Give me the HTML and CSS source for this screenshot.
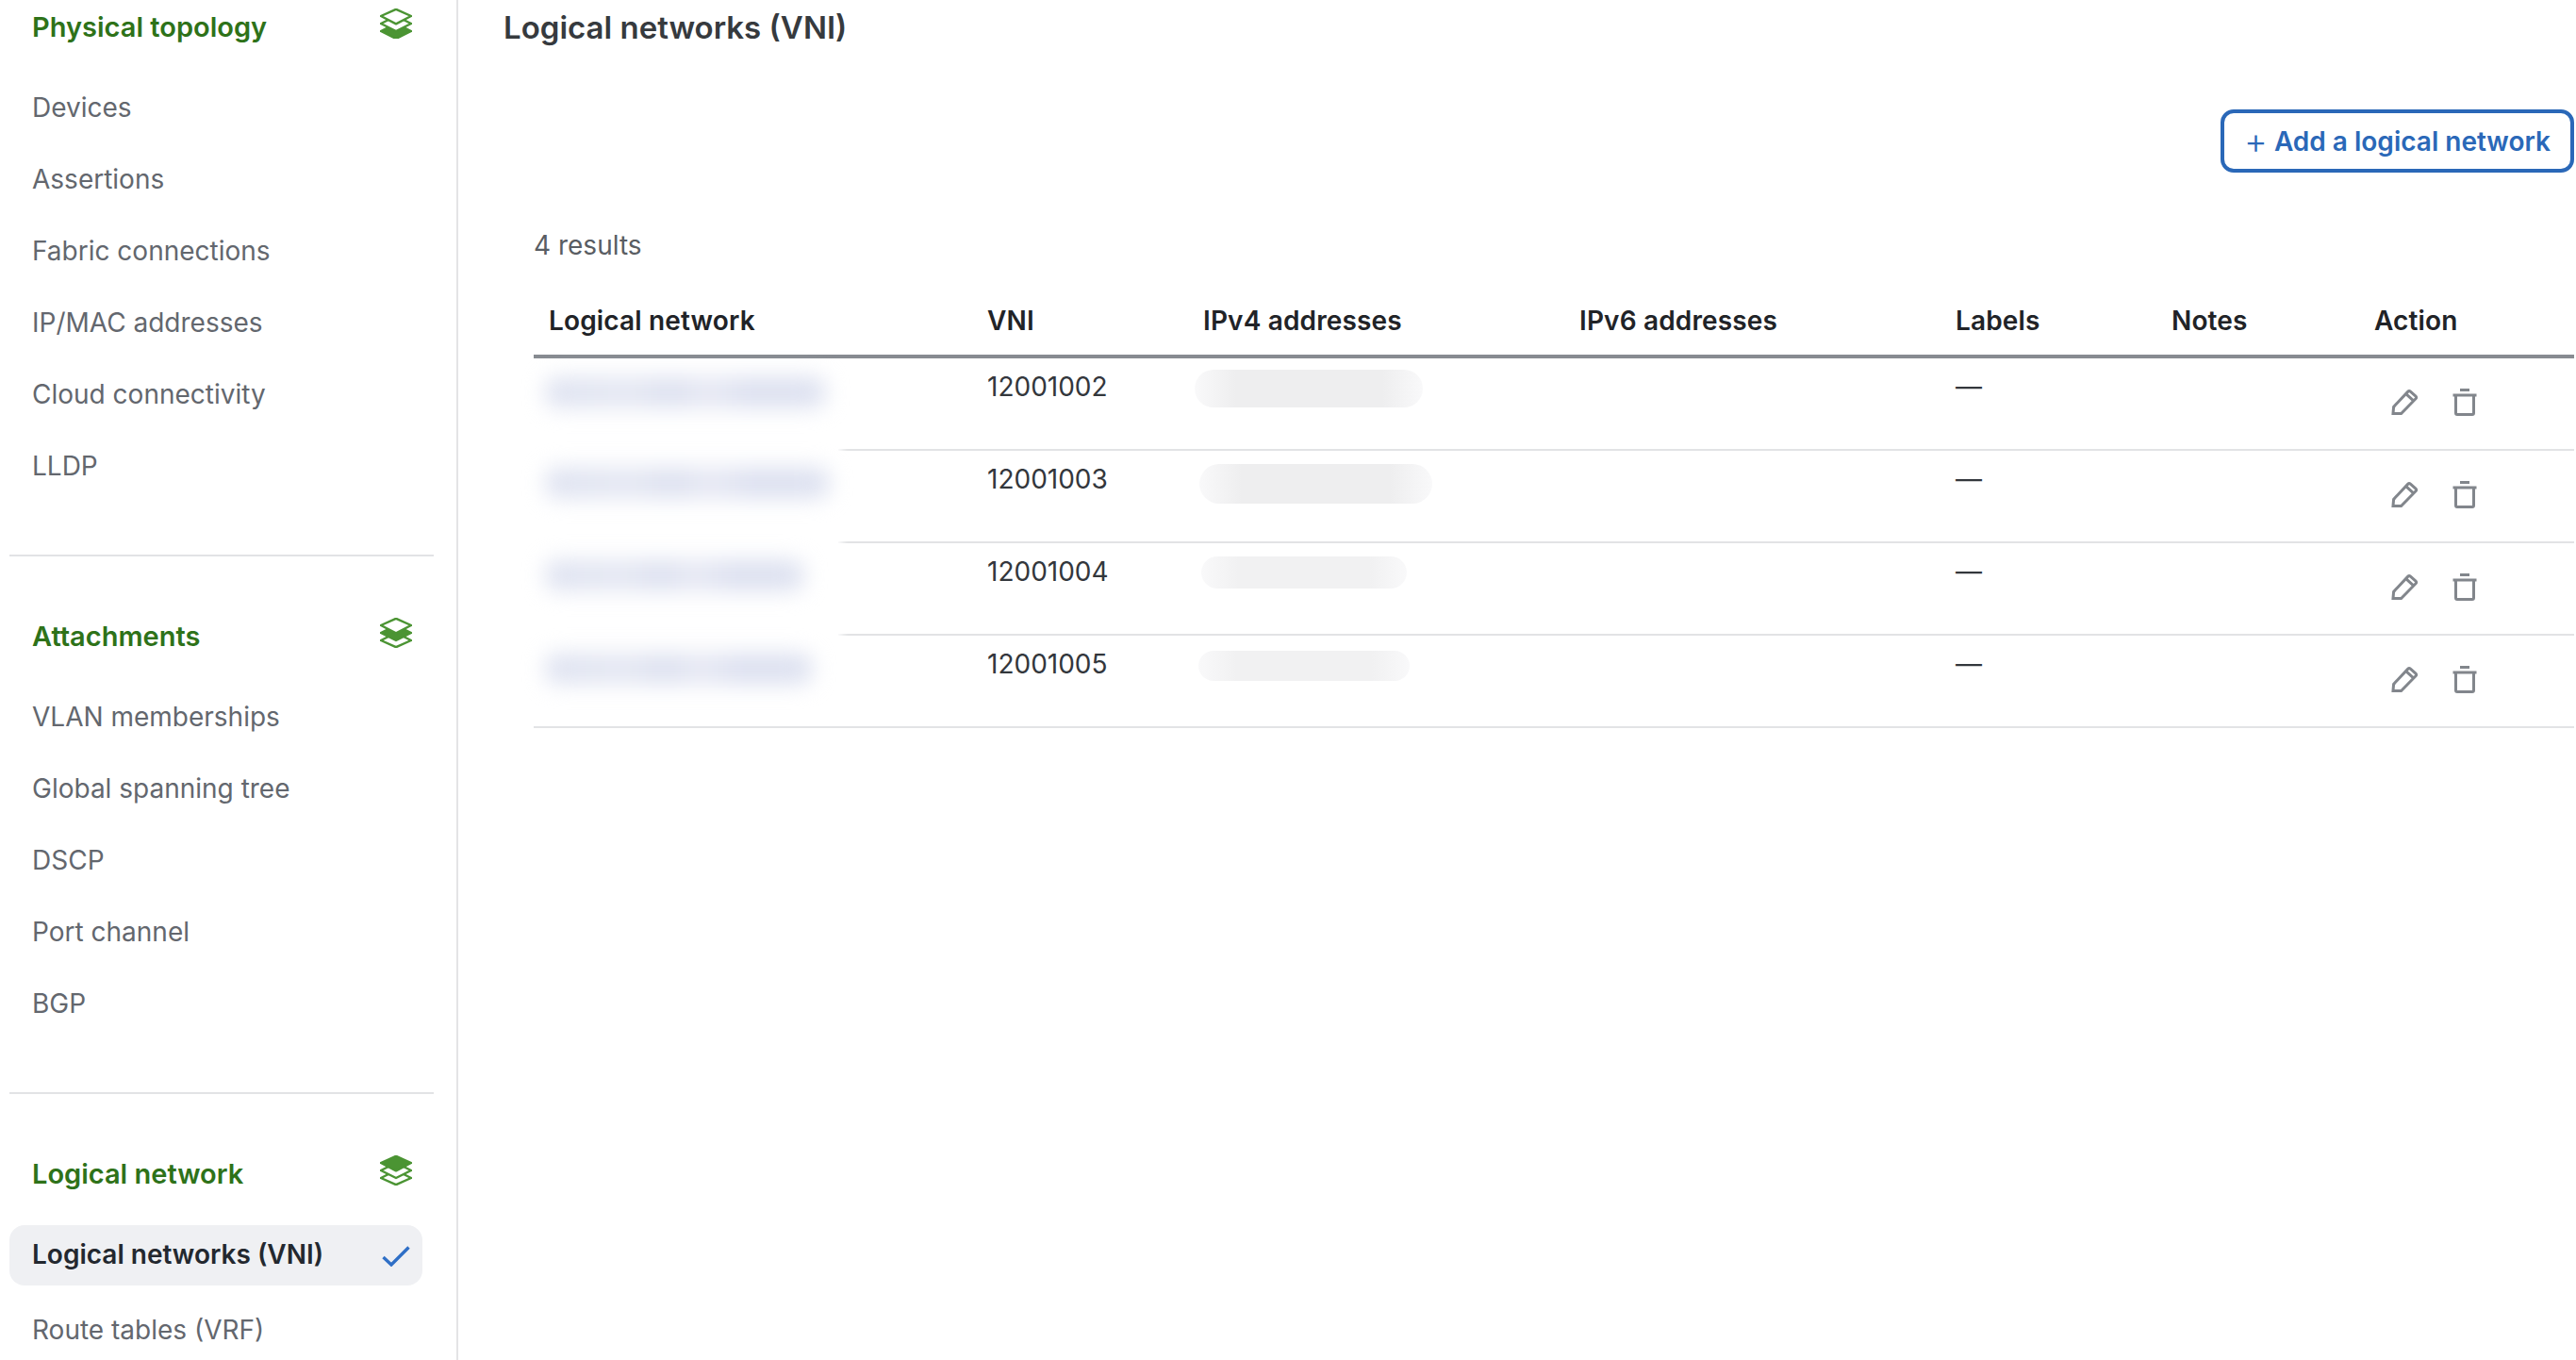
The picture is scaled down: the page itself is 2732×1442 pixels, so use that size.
FILE: index.html
```html
<!DOCTYPE html>
<html lang="en">
<head>
<meta charset="utf-8">
<title>Logical networks (VNI)</title>
<link rel="stylesheet" href="styles.css">
</head>
<body>
<svg class="defs" width="0" height="0" aria-hidden="true">
  <defs>
    <path id="d-pencil" d="M2 26.5 L2.6 19.4 L17.6 3.4 Q19 2 20.4 3.2 L26 8 Q27.4 9.4 26 10.8 L10.6 26.6 Z M16.5 6.4 L23.6 12.8"/>
    <path id="d-trash" d="M8 1.5 H18 M0.5 7 H25.5 M3.5 7 V26 Q3.5 27.5 5 27.5 H21 Q22.5 27.5 22.5 26 V7"/>
  </defs>
</svg>
<div class="app">
  <nav class="sidebar">
    <section class="nav-section">
      <header class="nav-head"><span>Physical topology</span>
        <svg class="layers" viewBox="0 0 34 32"><path class="lo" d="M17 16 L33 24 L17 32 L1 24 Z"/><path d="M1 16 L17 8 L33 16 L17 24 Z"/><path d="M1 8 L17 0.8 L33 8 L17 16.4 Z"/></svg>
      </header>
      <a class="nav-item">Devices</a>
      <a class="nav-item">Assertions</a>
      <a class="nav-item">Fabric connections</a>
      <a class="nav-item">IP/MAC addresses</a>
      <a class="nav-item">Cloud connectivity</a>
      <a class="nav-item">LLDP</a>
    </section>
    <section class="nav-section">
      <header class="nav-head"><span>Attachments</span>
        <svg class="layers" viewBox="0 0 34 32"><path d="M1 24 L17 16 L33 24 L17 31.2 Z"/><path class="lo" d="M1 16 L17 8 L33 16 L17 24 Z"/><path d="M1 8 L17 0.8 L33 8 L17 16.4 Z"/></svg>
      </header>
      <a class="nav-item">VLAN memberships</a>
      <a class="nav-item">Global spanning tree</a>
      <a class="nav-item">DSCP</a>
      <a class="nav-item">Port channel</a>
      <a class="nav-item">BGP</a>
    </section>
    <section class="nav-section last">
      <header class="nav-head head-tight"><span>Logical network</span>
        <svg class="layers" viewBox="0 0 34 32"><path d="M1 24 L17 16 L33 24 L17 31.2 Z"/><path d="M1 16 L17 8 L33 16 L17 24 Z"/><path class="lo" d="M1 8 L17 0.8 L33 8 L17 16.4 Z"/></svg>
      </header>
      <a class="nav-item selected"><span>Logical networks (VNI)</span>
        <svg class="check" viewBox="0 0 30 22"><path d="M1.5 12 L10 20 L28.5 1.5"/></svg>
      </a>
      <a class="nav-item">Route tables (VRF)</a>
    </section>
  </nav>
  <main class="content">
    <h1 class="title">Logical networks (VNI)</h1>
    <div class="toolbar">
      <button class="add-btn" type="button"><span class="plus">+</span> Add a logical network</button>
    </div>
    <p class="results">4 results</p>
    <div class="table-wrap">
      <table class="grid">
        <colgroup>
          <col class="c1"><col class="c2"><col class="c3"><col class="c4"><col class="c5"><col class="c6"><col class="c7">
        </colgroup>
        <thead>
          <tr><th>Logical network</th><th>VNI</th><th>IPv4 addresses</th><th>IPv6 addresses</th><th>Labels</th><th>Notes</th><th>Action</th></tr>
        </thead>
        <tbody>
          <tr><td></td><td>12001002</td><td class="ip"><div class="pill p1"></div></td><td></td><td>—</td><td></td>
            <td class="act"><div class="actions"><svg class="ico" viewBox="0 0 29 29"><use href="#d-pencil"/></svg><svg class="ico" viewBox="0 0 26 29"><use href="#d-trash"/></svg></div></td></tr>
          <tr><td></td><td>12001003</td><td class="ip"><div class="pill p2"></div></td><td></td><td>—</td><td></td>
            <td class="act"><div class="actions"><svg class="ico" viewBox="0 0 29 29"><use href="#d-pencil"/></svg><svg class="ico" viewBox="0 0 26 29"><use href="#d-trash"/></svg></div></td></tr>
          <tr><td></td><td>12001004</td><td class="ip"><div class="pill p3"></div></td><td></td><td>—</td><td></td>
            <td class="act"><div class="actions"><svg class="ico" viewBox="0 0 29 29"><use href="#d-pencil"/></svg><svg class="ico" viewBox="0 0 26 29"><use href="#d-trash"/></svg></div></td></tr>
          <tr><td></td><td>12001005</td><td class="ip"><div class="pill p4"></div></td><td></td><td>—</td><td></td>
            <td class="act"><div class="actions"><svg class="ico" viewBox="0 0 29 29"><use href="#d-pencil"/></svg><svg class="ico" viewBox="0 0 26 29"><use href="#d-trash"/></svg></div></td></tr>
        </tbody>
      </table>
      <div class="redact">
        <div class="bar b1"></div>
        <div class="bar b2"></div>
        <div class="bar b3"></div>
        <div class="bar b4"></div>
      </div>
    </div>
  </main>
</div>
</body>
</html>
```
FILE: styles.css
```css
* { box-sizing: border-box; }
html, body { margin: 0; height: 100%; overflow: hidden; background: #fff; }
body { font-family: Inter, "Liberation Sans", sans-serif; font-size: 28px; color: #23272c; }
.defs { position: absolute; }
.app { display: flex; height: 1442px; overflow: hidden; }

.sidebar { width: 486px; flex: none; border-right: 2px solid #e4e4e6; padding-left: 10px; height: 1442px; overflow: hidden; }
.nav-section { width: 450px; border-bottom: 2px solid #e2e3e5; padding-bottom: 56px; margin-bottom: 56px; }
.nav-section.last { border-bottom: 0; padding-bottom: 0; margin-bottom: 0; }
.nav-head { display: flex; justify-content: space-between; align-items: center; height: 56px; padding: 0 23px 0 24px; margin-bottom: 20px; font-size: 29px; font-weight: 600; color: #2e7219; }
.nav-head.head-tight { margin-bottom: 27px; }
.layers { width: 34px; height: 32px; margin-top: -6px; }
.layers path { fill: #fff; stroke: #4b9433; stroke-width: 2.4; stroke-linejoin: round; }
.layers path.lo { fill: #4b9433; }
.nav-item { display: flex; align-items: center; height: 76px; padding-left: 24px; color: #63676e; }
.nav-item.selected { height: 64px; width: 438px; justify-content: space-between; padding: 0 13px 3px 24px; margin-bottom: 9px; background: #eff0f3; border-radius: 16px; font-weight: 600; color: #23282f; }
.check { width: 30px; height: 22px; margin-top: 4px; }
.check path { fill: none; stroke: #2f6fc6; stroke-width: 3.4; }

.content { flex: 1; min-width: 0; padding: 0 2px 0 48px; }
.title { margin: 0; height: 58px; line-height: 58px; font-size: 33px; font-weight: 600; color: #363a3e; }
.toolbar { display: flex; justify-content: flex-end; margin-top: 58px; }
.add-btn { height: 67px; width: 375px; padding: 0; border: 4px solid #2a68b8; border-radius: 14px; background: #fff; color: #2a68b8; font: 600 28px Inter, "Liberation Sans", sans-serif; }
.plus { font-size: 38px; font-weight: 300; line-height: 20px; vertical-align: -3px; }
.results { margin: 59px 0 0 32px; line-height: 36px; color: #595d63; }

.table-wrap { position: relative; margin-left: 32px; }
.grid { width: 2164px; table-layout: fixed; border-collapse: separate; border-spacing: 0; }
.c1 { width: 465px; } .c2 { width: 229px; } .c3 { width: 399px; } .c4 { width: 399px; }
.c5 { width: 229px; } .c6 { width: 215px; } .c7 { width: 228px; }
.grid th { height: 102px; padding: 0 0 18px 16px; line-height: 36px; vertical-align: bottom; text-align: left; font-weight: 600; letter-spacing: 0.15px; color: #212327; border-bottom: 4px solid #878b91; }
.grid td { height: 98px; padding: 12px 0 0 16px; line-height: 36px; vertical-align: top; color: #33373c; border-bottom: 2px solid #e2e3e5; }
.grid td.ip { padding: 0; }
.grid td.act { padding: 0; vertical-align: middle; }
.actions { display: flex; align-items: center; gap: 36px; padding: 0 0 4px 34px; }
.ico { width: 29px; height: 29px; fill: none; stroke: #82868c; stroke-width: 3; }
.ico + .ico { width: 26px; }

.pill { height: 40px; border-radius: 20px; background: linear-gradient(to right, #f9f9fa, #eeeeef 18%, #eeeeef 82%, #f9f9fa); }
.p1 { width: 242px; margin: 12px 0 0 7px; }
.p2 { width: 247px; height: 42px; margin: 14px 0 0 12px; border-radius: 21px; }
.p3 { width: 218px; height: 34px; margin: 14px 0 0 14px; border-radius: 17px; background: linear-gradient(to right, #f9f9fa, #f1f1f2 18%, #f1f1f2 82%, #f9f9fa); }
.p4 { width: 224px; height: 32px; margin: 16px 0 0 11px; border-radius: 16px; background: linear-gradient(to right, #f9f9fa, #f1f1f2 18%, #f1f1f2 82%, #f9f9fa); }

.redact { position: absolute; left: 0; top: 116px; width: 323px; height: 354px; padding: 5px 0 0 12px; background: #fff; box-shadow: 0 0 8px 4px #fff; border-radius: 30px; }
.bar { height: 34px; border-radius: 14px; filter: blur(11px); background: linear-gradient(to right, #dfe3f1, #e5e8f3 30%, #dde1f0 45%, #e7e9f4 58%, #dce0f0 75%, #dfe3f1); }
.b1 { width: 298px; }
.b2 { width: 302px; margin-top: 62px; }
.b3 { width: 275px; margin-top: 64px; }
.b4 { width: 284px; margin-top: 65px; }
```
